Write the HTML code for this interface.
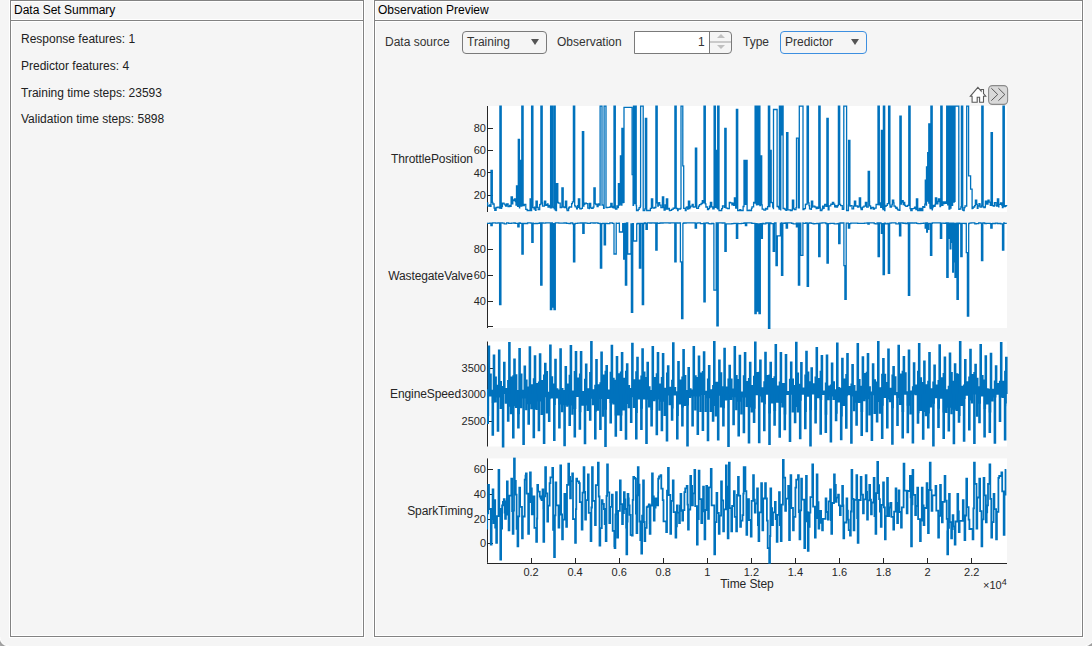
<!DOCTYPE html>
<html><head><meta charset="utf-8">
<style>
html,body{margin:0;padding:0;}
body{width:1092px;height:646px;overflow:hidden;background:#f5f5f5;position:relative;font-family:"Liberation Sans",sans-serif;color:#212121;}
.abs{position:absolute;}
.panel{position:absolute;box-sizing:border-box;border:1px solid #828282;box-shadow:0 0 0 1px #fff, inset 0 0 0 1px #fff;}
.sep{position:absolute;height:1px;background:#828282;box-shadow:0 -1px 0 #fff,0 1px 0 #fff;}
.t12{position:absolute;font-size:12px;line-height:14px;white-space:nowrap;}
.dd{position:absolute;box-sizing:border-box;border:1px solid #7a7a7a;border-radius:4px;background:#f5f5f5;}
.tri{position:absolute;width:0;height:0;border-left:4px solid transparent;border-right:4px solid transparent;border-top:6px solid #555;}
.ax{position:absolute;font-size:11px;line-height:13px;white-space:nowrap;color:#262626;}
.axl{position:absolute;font-size:12px;line-height:14px;white-space:nowrap;color:#262626;letter-spacing:-0.1px;}
</style></head>
<body>
<div class="abs" style="left:0;top:637px;width:9px;height:9px;background:radial-gradient(circle at 100% 0, #f5f5f5 8.2px, #fff 9px, #999 10.2px, #aaa 12px);"></div>
<div class="abs" style="left:1076px;top:630px;width:16px;height:16px;background:radial-gradient(circle at 4px 0, #f5f5f5 16.2px, #fff 17px, #999 18.2px, #aaa 20px);"></div>
<!-- left panel -->
<div class="panel" style="left:10px;top:0;width:354px;height:637px;"></div>
<div class="sep" style="left:11px;top:20px;width:352px;"></div>
<div class="t12" style="left:14px;top:3px;color:#000;">Data Set Summary</div>
<div class="t12" style="left:21px;top:32px;">Response features: 1</div>
<div class="t12" style="left:21px;top:59px;">Predictor features: 4</div>
<div class="t12" style="left:21px;top:86px;">Training time steps: 23593</div>
<div class="t12" style="left:21px;top:112px;">Validation time steps: 5898</div>

<!-- right panel -->
<div class="panel" style="left:374px;top:0;width:709px;height:637px;"></div>
<div class="sep" style="left:375px;top:20px;width:707px;"></div>
<div class="t12" style="left:378px;top:3px;color:#000;">Observation Preview</div>

<div class="t12" style="color:#333;left:385px;top:35px;">Data source</div>
<div class="dd" style="left:462px;top:31px;width:85px;height:23px;"></div>
<div class="t12" style="color:#333;left:467px;top:35px;">Training</div>
<div class="tri" style="left:531px;top:39px;"></div>

<div class="t12" style="color:#333;left:557px;top:35px;">Observation</div>
<div class="abs" style="left:634px;top:31px;width:98px;height:23px;box-sizing:border-box;border:1px solid #7a7a7a;border-radius:0 4px 4px 0;background:#f5f5f5;"></div>
<div class="abs" style="left:635px;top:32px;width:74px;height:21px;background:#fff;border-right:1px solid #7a7a7a;"></div>
<div class="abs" style="left:710px;top:41px;width:21px;height:2px;background:#cacaca;"></div>
<div class="t12" style="color:#333;left:698px;top:35px;">1</div>
<div class="abs" style="left:717px;top:34px;width:0;height:0;border-left:4px solid transparent;border-right:4px solid transparent;border-bottom:4px solid #c0c0c0;"></div>
<div class="abs" style="left:717px;top:45px;width:0;height:0;border-left:4px solid transparent;border-right:4px solid transparent;border-top:4px solid #c0c0c0;"></div>

<div class="t12" style="color:#333;left:743px;top:35px;">Type</div>
<div class="dd" style="left:780px;top:31px;width:87px;height:23px;border-color:#3d8fe0;"></div>
<div class="t12" style="color:#333;left:785px;top:35px;">Predictor</div>
<div class="tri" style="left:851px;top:39px;"></div>

<!-- toolbar -->
<svg class="abs" style="left:968px;top:85px;" width="42" height="22" viewBox="0 0 42 22">
  <path d="M2.4 11.2 L9.9 2.4 L13.1 6 L13.1 4.5 L15.5 4.5 L15.5 8.6 L17.7 11.2 L15.5 11.2 L15.5 17.2 L11.6 17.2 L11.6 12.3 L9.2 12.3 L9.2 17.2 L4.1 17.2 L4.1 11.2 Z" fill="#fff" stroke="#5a5a5a" stroke-width="1.1" stroke-linejoin="miter"/>
  <rect x="20.6" y="0.6" width="19" height="18.8" rx="3.8" fill="#d9d9d9" stroke="#8a8a8a" stroke-width="1.1"/>
  <path d="M23.3 3.2 L29.7 9.5 L23.3 15.7 M30.4 3.2 L36.8 9.5 L30.4 15.7" fill="none" stroke="#4a4a4a" stroke-width="0.9"/>
</svg>

<!-- plots -->
<svg class="abs" style="left:0;top:0" width="1092" height="646" viewBox="0 0 1092 646">
<rect x="487" y="106" width="520" height="106" fill="#fff"/>
<rect x="487" y="222.9" width="520" height="105.1" fill="#fff"/>
<rect x="487" y="341.5" width="520" height="105" fill="#fff"/>
<rect x="487" y="458.4" width="520" height="104.4" fill="#fff"/>
<defs>
<clipPath id="c0"><rect x="487" y="105" width="521" height="108"/></clipPath>
<clipPath id="c1"><rect x="487" y="221.9" width="521" height="107.1"/></clipPath>
<clipPath id="c2"><rect x="487" y="340.5" width="521" height="107"/></clipPath>
<clipPath id="c3"><rect x="487" y="457.4" width="521" height="106.4"/></clipPath>
</defs>
<path d="M487.5 106 V212" stroke="#262626" stroke-width="1" fill="none"/>
<path d="M487 128.5 H493" stroke="#262626" stroke-width="1"/>
<path d="M487 150.5 H493" stroke="#262626" stroke-width="1"/>
<path d="M487 172.5 H493" stroke="#262626" stroke-width="1"/>
<path d="M487 195.5 H493" stroke="#262626" stroke-width="1"/>
<path d="M487.5 222.9 V328" stroke="#262626" stroke-width="1" fill="none"/>
<path d="M487 249.5 H493" stroke="#262626" stroke-width="1"/>
<path d="M487 275.5 H493" stroke="#262626" stroke-width="1"/>
<path d="M487 301.5 H493" stroke="#262626" stroke-width="1"/>
<path d="M487 326.5 H493" stroke="#262626" stroke-width="1"/>
<path d="M487.5 341.5 V446.5" stroke="#262626" stroke-width="1" fill="none"/>
<path d="M487 368.5 H493" stroke="#262626" stroke-width="1"/>
<path d="M487 394.5 H493" stroke="#262626" stroke-width="1"/>
<path d="M487 421.5 H493" stroke="#262626" stroke-width="1"/>
<path d="M487.5 458.4 V562.8" stroke="#262626" stroke-width="1" fill="none"/>
<path d="M487 469.5 H493" stroke="#262626" stroke-width="1"/>
<path d="M487 494.5 H493" stroke="#262626" stroke-width="1"/>
<path d="M487 519.5 H493" stroke="#262626" stroke-width="1"/>
<path d="M487 543.5 H493" stroke="#262626" stroke-width="1"/>
<path d="M487 563.5 H1007" stroke="#262626" stroke-width="1"/>
<path d="M531.5 558 V563" stroke="#262626" stroke-width="1"/>
<path d="M575.5 558 V563" stroke="#262626" stroke-width="1"/>
<path d="M619.5 558 V563" stroke="#262626" stroke-width="1"/>
<path d="M663.5 558 V563" stroke="#262626" stroke-width="1"/>
<path d="M707.5 558 V563" stroke="#262626" stroke-width="1"/>
<path d="M751.5 558 V563" stroke="#262626" stroke-width="1"/>
<path d="M795.5 558 V563" stroke="#262626" stroke-width="1"/>
<path d="M839.5 558 V563" stroke="#262626" stroke-width="1"/>
<path d="M883.5 558 V563" stroke="#262626" stroke-width="1"/>
<path d="M927.5 558 V563" stroke="#262626" stroke-width="1"/>
<path d="M971.5 558 V563" stroke="#262626" stroke-width="1"/>
<path clip-path="url(#c0)" d="M487 202.9L487.7 202.9L487.7 205.8L488.9 205.8L488.9 206.2L489.6 206.2L489.6 205L490.1 205L490.1 206.4L491 206.4L491 170.3L492.3 170.3L492.3 202.4L492.8 202.4L492.8 204L494.1 204L494.1 208.2L494.8 208.2L494.8 210.3L496.1 210.3L496.1 207.5L497.7 207.5L497.7 207.1L499.4 207.1L499.4 208.1L499.9 208.1L499.9 106.2L501.2 106.2L501.2 208.4L501.6 208.4L501.6 206.7L502.4 206.7L502.4 203.1L504 203.1L504 204.2L505.1 204.2L505.1 205.1L505.7 205.1L505.7 206.1L506.7 206.1L506.7 204L508.1 204L508.1 206.5L509.7 206.5L509.7 205.4L510.2 205.4L510.2 206.4L511.1 206.4L511.1 196.8L512.4 196.8L512.4 203.8L512.8 203.8L512.8 200L513.7 200L513.7 200.5L514.4 200.5L514.4 199L515.4 199L515.4 201.6L516 201.6L516 205.2L516.5 205.2L516.5 185.8L517.6 185.8L517.6 206.4L518.3 206.4L518.3 139.3L519.4 139.3L519.4 206.8L519.5 206.8L519.5 207.8L519.7 207.8L519.7 160.3L520.8 160.3L520.8 206.2L521.8 206.2L521.8 106.2L523.1 106.2L523.1 205.7L524.3 205.7L524.3 204.3L525.8 204.3L525.8 209.3L526.4 209.3L526.4 209.4L527.2 209.4L527.2 210.5L530.1 210.5L530.1 199L530.8 199L530.8 210.5L531.6 210.5L531.6 106.2L532.9 106.2L532.9 207.7L534.1 207.7L534.1 209L534.6 209L534.6 207.2L535.4 207.2L535.4 210.3L536 210.3L536 201.2L537.3 201.2L537.3 207.3L538.2 207.3L538.2 209.7L539.7 209.7L539.7 204.7L540.4 204.7L540.4 204.2L540.9 204.2L540.9 106.2L542.2 106.2L542.2 203L542.5 203L542.5 206.2L544 206.2L544 206.2L544.4 206.2L544.4 201.2L545.7 201.2L545.7 205.4L546.7 205.4L546.7 204.7L547.5 204.7L547.5 203.9L548 203.9L548 207.2L549.3 207.2L549.3 205.5L550.4 205.5L550.4 207.9L550.6 207.9L550.6 106.2L551.3 106.2L551.3 207.9L551.7 207.9L551.7 206.1L552.2 206.1L552.2 207.1L552.4 207.1L552.4 106.2L553.1 106.2L553.1 207.1L553.4 207.1L553.4 207.5L554.3 207.5L554.3 208.8L554.5 208.8L554.5 106.2L555.2 106.2L555.2 208.8L555.3 208.8L555.3 210L556.2 210L556.2 210.5L556.5 210.5L556.5 183.6L557.8 183.6L557.8 202.5L558.4 202.5L558.4 203.2L560.2 203.2L560.2 207.5L561.6 207.5L561.6 207.1L561.9 207.1L561.9 188L563.2 188L563.2 207L563.7 207L563.7 206.9L564.3 206.9L564.3 207.6L565.4 207.6L565.4 201.2L566.7 201.2L566.7 208.9L567.1 208.9L567.1 210.5L568.6 210.5L568.6 208L569.3 208L569.3 206.8L570.4 206.8L570.4 207L571.6 207L571.6 203.7L572.4 203.7L572.4 201.8L573.4 201.8L573.4 106.2L574.7 106.2L574.7 205.7L575.2 205.7L575.2 206.9L576.6 206.9L576.6 208.9L577.4 208.9L577.4 205.7L578 205.7L578 207.3L578.4 207.3L578.4 199L579.7 199L579.7 208.1L579.9 208.1L579.9 208.9L581.4 208.9L581.4 208.4L582.4 208.4L582.4 131.6L583.7 131.6L583.7 206.2L583.9 206.2L583.9 204.3L584.8 204.3L584.8 203.1L586.4 203.1L586.4 203.7L587.8 203.7L587.8 208.1L589.3 208.1L589.3 208.5L589.4 208.5L589.4 203.4L590.7 203.4L590.7 207.8L591.7 207.8L591.7 208.4L593.1 208.4L593.1 207.1L593.9 207.1L593.9 188L595.2 188L595.2 203.6L595.8 203.6L595.8 204.5L597.1 204.5L597.1 206.6L598.1 206.6L598.1 203.9L598.8 203.9L598.8 205.1L599.8 205.1L599.8 205.2L600.1 205.2L600.1 106.2L602 106.2L602 205L602.5 205L602.5 205.2L603.6 205.2L603.6 208.4L604.1 208.4L604.1 106.2L606 106.2L606 207.6L606.3 207.6L606.3 207.5L607.7 207.5L607.7 207.3L608.5 207.3L608.5 207.3L610.1 207.3L610.1 206.6L610.8 206.6L610.8 203.4L612.1 203.4L612.1 207.4L612.6 207.4L612.6 206.3L613.2 206.3L613.2 207.9L614 207.9L614 106.2L615.3 106.2L615.3 208.4L615.5 208.4L615.5 209.1L616.9 209.1L616.9 206L617.4 206L617.4 207.6L618.4 207.6L618.4 183.6L619.7 183.6L619.7 205.1L620.1 205.1L620.1 204.1L620.4 204.1L620.4 155.9L621.7 155.9L621.7 205.2L621.9 205.2L621.9 128.3L623.2 128.3L623.2 202.7L623.3 202.7L623.3 202.3L624 202.3L624 107.3L632.1 107.3L632.1 174.7L633.1 174.7L633.1 205.4L633.5 205.4L633.5 106.2L634.6 106.2L634.6 203.7L635.1 203.7L635.1 106.2L636.2 106.2L636.2 205.6L636.5 205.6L636.5 210.5L638.2 210.5L638.2 209.3L639.1 209.3L639.1 207.6L640.3 207.6L640.3 206L640.6 206L640.6 106.2L643.2 106.2L643.2 210.5L644.8 210.5L644.8 208.8L645.4 208.8L645.4 118.4L646.7 118.4L646.7 210.5L650.4 210.5L650.4 208.4L651.4 208.4L651.4 199L652.7 199L652.7 207.1L652.8 207.1L652.8 207.8L653.5 207.8L653.5 208L654.7 208L654.7 207.5L655.9 207.5L655.9 106.2L657.2 106.2L657.2 202.9L657.8 202.9L657.8 206L658.3 206L658.3 203.6L659.1 203.6L659.1 202.6L659.7 202.6L659.7 205.1L660.9 205.1L660.9 207.6L661.9 207.6L661.9 207.7L662.4 207.7L662.4 196.8L663.7 196.8L663.7 207.6L664.1 207.6L664.1 210.2L665.1 210.2L665.1 205L666.3 205L666.3 209L666.4 209L666.4 199L667.7 199L667.7 209L668 209L668 208.5L669.4 208.5L669.4 210.5L670.1 210.5L670.1 210.4L671.6 210.4L671.6 209.4L673.1 209.4L673.1 208.1L673.8 208.1L673.8 208.4L674.5 208.4L674.5 207.9L674.9 207.9L674.9 106.2L676.2 106.2L676.2 208.5L677 208.5L677 208.5L677.6 208.5L677.6 210.5L678.1 210.5L678.1 209L679.5 209L679.5 209.2L680.3 209.2L680.3 208.5L681 208.5L681 106.2L682.8 106.2L682.8 165.9L683.7 165.9L683.7 208.3L685.3 208.3L685.3 210.5L686.1 210.5L686.1 207.4L687 207.4L687 207L687.6 207L687.6 209.1L688.1 209.1L688.1 208.5L688.4 208.5L688.4 201.2L689.7 201.2L689.7 208.5L689.8 208.5L689.8 207.5L690.6 207.5L690.6 206.2L692.2 206.2L692.2 204.3L693.2 204.3L693.2 207L694.7 207L694.7 206.9L695.4 206.9L695.4 148.2L696.7 148.2L696.7 208L696.8 208L696.8 208.3L698.5 208.3L698.5 206.2L699.5 206.2L699.5 204.6L701.1 204.6L701.1 203.5L702.3 203.5L702.3 200.6L703.3 200.6L703.3 202.8L704 202.8L704 106.2L705.3 106.2L705.3 203.9L705.9 203.9L705.9 207L707.5 207L707.5 209.7L708.5 209.7L708.5 208.6L709.5 208.6L709.5 206.1L710.1 206.1L710.1 207L710.4 207L710.4 202.3L711.7 202.3L711.7 206.9L712.8 206.9L712.8 208.8L714.1 208.8L714.1 106.2L715.4 106.2L715.4 207.4L715.9 207.4L715.9 150.4L717.2 150.4L717.2 208.3L717.6 208.3L717.6 208.9L717.7 208.9L717.7 106.2L719 106.2L719 210.5L721.7 210.5L721.7 208.6L722.5 208.6L722.5 205.9L724.2 205.9L724.2 207.4L724.8 207.4L724.8 128.3L726.1 128.3L726.1 208.1L727.6 208.1L727.6 208.7L729.3 208.7L729.3 202.4L730.5 202.4L730.5 202.8L731.9 202.8L731.9 204.8L733.2 204.8L733.2 203.2L733.7 203.2L733.7 205.4L734.4 205.4L734.4 197.9L735.7 197.9L735.7 208.2L736.4 208.2L736.4 109.5L737.7 109.5L737.7 210.5L739.8 210.5L739.8 209.6L740.7 209.6L740.7 210.5L743.1 210.5L743.1 206.5L744 206.5L744 160.3L745.3 160.3L745.3 204.4L745.8 204.4L745.8 160.3L747.1 160.3L747.1 210.5L747.4 210.5L747.4 210.5L749 210.5L749 210.2L749.9 210.2L749.9 210.5L751.5 210.5L751.5 208.3L752 208.3L752 206.8L753.6 206.8L753.6 202.5L755 202.5L755 203.1L755.1 203.1L755.1 106.2L756.4 106.2L756.4 204.4L756.5 204.4L756.5 204.8L756.9 204.8L756.9 106.2L758.2 106.2L758.2 204.7L758.6 204.7L758.6 106.2L759.9 106.2L759.9 205.6L760.4 205.6L760.4 155.9L761.7 155.9L761.7 204.9L762.2 204.9L762.2 209.2L763.9 209.2L763.9 210.2L765.6 210.2L765.6 208.5L766.3 208.5L766.3 209L767.6 209L767.6 206.7L768.4 206.7L768.4 106.2L769.7 106.2L769.7 206.6L769.9 206.6L769.9 150.4L771.2 150.4L771.2 202.5L771.6 202.5L771.6 202.7L772.7 202.7L772.7 207.2L773.4 207.2L773.4 208.5L773.5 208.5L773.5 109.5L777.1 109.5L777.1 206.5L778.5 206.5L778.5 207.6L779.1 207.6L779.1 209.1L779.4 209.1L779.4 106.2L780.7 106.2L780.7 209.1L780.8 209.1L780.8 210.5L780.8 210.5L780.8 134.9L781.8 134.9L781.8 106.2L783.1 106.2L783.1 208.5L783.8 208.5L783.8 208.4L784.7 208.4L784.7 209.2L785.5 209.2L785.5 210L786.5 210L786.5 210.4L786.6 210.4L786.6 132.7L787.9 132.7L787.9 209.9L788.9 209.9L788.9 209.9L790.4 209.9L790.4 210.5L792.1 210.5L792.1 209.5L792.4 209.5L792.4 200.1L793.7 200.1L793.7 208.8L794.5 208.8L794.5 209.7L796 209.7L796 207.7L796.5 207.7L796.5 138.2L798.4 138.2L798.4 207.8L799.3 207.8L799.3 106.2L803 106.2L803 209.6L804 209.6L804 208.6L805.4 208.6L805.4 204.5L806 204.5L806 204.1L807.1 204.1L807.1 106.2L808.4 106.2L808.4 202.8L809 202.8L809 205.7L809.5 205.7L809.5 208.8L810.5 208.8L810.5 209L811.3 209L811.3 209.4L811.4 209.4L811.4 201.2L812.7 201.2L812.7 207.1L812.9 207.1L812.9 206.1L814.2 206.1L814.2 206.2L814.8 206.2L814.8 207L815.5 207L815.5 207.1L816.2 207.1L816.2 208.5L816.9 208.5L816.9 207.1L818 207.1L818 208.4L818.8 208.4L818.8 106.2L820.1 106.2L820.1 207.5L820.3 207.5L820.3 210.5L821.9 210.5L821.9 209.2L822.6 209.2L822.6 206.1L823.2 206.1L823.2 208.3L824.1 208.3L824.1 206.2L824.7 206.2L824.7 204.3L826.1 204.3L826.1 206.3L826.9 206.3L826.9 118.4L828.2 118.4L828.2 209.9L829 209.9L829 205.9L830.8 205.9L830.8 204.1L832 204.1L832 204.4L832.4 204.4L832.4 202.3L833.7 202.3L833.7 204.2L834.7 204.2L834.7 206.8L835.6 206.8L835.6 205.6L836.1 205.6L836.1 207.2L837.5 207.2L837.5 205.5L838.4 205.5L838.4 106.2L839.7 106.2L839.7 204.4L840.6 204.4L840.6 205.6L842.3 205.6L842.3 209.3L843.7 209.3L843.7 208.1L843.8 208.1L843.8 106.2L846.6 106.2L846.6 210.5L848.4 210.5L848.4 205.1L848.6 205.1L848.6 140.5L849.9 140.5L849.9 206.1L850.3 206.1L850.3 205.6L852 205.6L852 208.8L853.6 208.8L853.6 206.1L854.4 206.1L854.4 201.2L855.7 201.2L855.7 206.2L855.8 206.2L855.8 206L857.5 206L857.5 207L858.9 207L858.9 206.1L859.3 206.1L859.3 197.9L860.6 197.9L860.6 207.9L861.1 207.9L861.1 209.6L862.4 209.6L862.4 207.1L863.9 207.1L863.9 206.2L865.4 206.2L865.4 202.3L866.7 202.3L866.7 207.1L867.4 207.1L867.4 207.1L868.2 207.1L868.2 171.4L869.5 171.4L869.5 201.3L869.6 201.3L869.6 205.9L870.6 205.9L870.6 208.6L871.8 208.6L871.8 207.4L873.4 207.4L873.4 209.1L874.5 209.1L874.5 208.1L876.1 208.1L876.1 204.4L877.6 204.4L877.6 204.5L878 204.5L878 106.2L879.3 106.2L879.3 204.9L879.5 204.9L879.5 203L880.7 203L880.7 207.3L881.4 207.3L881.4 130.5L882.7 130.5L882.7 208.3L883 208.3L883 209.5L883.4 209.5L883.4 106.2L884.7 106.2L884.7 210.5L884.9 210.5L884.9 206.3L886.1 206.3L886.1 205.4L887.3 205.4L887.3 203.6L888.6 203.6L888.6 106.2L889.9 106.2L889.9 204.9L890.1 204.9L890.1 207.1L891.4 207.1L891.4 206.1L892 206.1L892 204.4L892.4 204.4L892.4 200.1L893.7 200.1L893.7 202.9L894 202.9L894 206.1L895.3 206.1L895.3 207.1L895.9 207.1L895.9 208.4L896.5 208.4L896.5 207.4L897.1 207.4L897.1 208.9L897.7 208.9L897.7 209.8L899.1 209.8L899.1 210.4L899.9 210.4L899.9 116.1L901.2 116.1L901.2 204.2L901.4 204.2L901.4 202.1L902 202.1L902 200.6L903.2 200.6L903.2 204.5L903.4 204.5L903.4 202.3L904.7 202.3L904.7 205.2L905 205.2L905 205.3L905.5 205.3L905.5 206.2L906.4 206.2L906.4 206.3L907.6 206.3L907.6 205.3L908.8 205.3L908.8 106.2L910.1 106.2L910.1 208.7L910.8 208.7L910.8 210.5L912.1 210.5L912.1 208.6L913 208.6L913 208.6L913.6 208.6L913.6 208.4L914.7 208.4L914.7 207.1L915.9 207.1L915.9 209.6L916.4 209.6L916.4 199L917.7 199L917.7 210.5L919.2 210.5L919.2 208.4L920 208.4L920 210.5L920.7 210.5L920.7 208.5L921.7 208.5L921.7 210.5L922.8 210.5L922.8 206.7L924 206.7L924 207.3L924.8 207.3L924.8 204.2L925.3 204.2L925.3 180.2L926.4 180.2L926.4 205.1L926.5 205.1L926.5 167L927.6 167L927.6 201L927.7 201L927.7 152.6L928.8 152.6L928.8 203.7L928.8 203.7L928.8 123.9L929.9 123.9L929.9 207.1L930.2 207.1L930.2 208.5L930.9 208.5L930.9 106.2L932.2 106.2L932.2 209.9L932.4 209.9L932.4 207.7L933 207.7L933 205.5L934.1 205.5L934.1 206.4L935.1 206.4L935.1 204.5L935.4 204.5L935.4 197.9L936.7 197.9L936.7 203.9L937.9 203.9L937.9 201.5L938.4 201.5L938.4 199L939.7 199L939.7 201.7L940 201.7L940 206.6L940.5 206.6L940.5 205.6L940.8 205.6L940.8 106.2L942.1 106.2L942.1 205.3L942.9 205.3L942.9 202L943.4 202L943.4 203.6L944.4 203.6L944.4 202L945.7 202L945.7 203.3L946.6 203.3L946.6 201L946.7 201L946.7 106.2L947.4 106.2L947.4 201L947.7 201L947.7 204.8L948.3 204.8L948.3 106.2L949 106.2L949 209L949.8 209L949.8 208.2L949.9 208.2L949.9 106.2L950.6 106.2L950.6 208.2L951 208.2L951 205.4L951.5 205.4L951.5 106.2L952.2 106.2L952.2 205.4L952.6 205.4L952.6 202.1L953.1 202.1L953.1 106.2L953.8 106.2L953.8 202.1L954.2 202.1L954.2 201.4L955 201.4L955 106.2L958.8 106.2L958.8 209.4L959.2 209.4L959.2 209L960.9 209L960.9 207L961.4 207L961.4 106.2L962.7 106.2L962.7 210.1L963.6 210.1L963.6 210.5L964.2 210.5L964.2 207.7L965 207.7L965 205.9L966.5 205.9L966.5 206.2L966.7 206.2L966.7 106.2L968.6 106.2L968.6 175.8L970.6 175.8L970.6 189.1L972.1 189.1L972.1 208.6L972.3 208.6L972.3 208.3L973.1 208.3L973.1 207L974.6 207L974.6 205.7L975.4 205.7L975.4 200.1L976.7 200.1L976.7 204.4L977.3 204.4L977.3 208.4L978 208.4L978 206L979 206L979 203.7L979.5 203.7L979.5 204L980.1 204L980.1 207.1L981.6 207.1L981.6 205.8L981.8 205.8L981.8 106.2L983.1 106.2L983.1 206.8L983.9 206.8L983.9 207.5L985.1 207.5L985.1 206.9L985.4 206.9L985.4 201.2L986.7 201.2L986.7 204.2L988 204.2L988 200.1L989.1 200.1L989.1 202.1L990.3 202.1L990.3 205.4L991.1 205.4L991.1 132.7L992.4 132.7L992.4 205.7L993.4 205.7L993.4 206L994.4 206L994.4 202.7L996 202.7L996 205.6L996.7 205.6L996.7 206L997.4 206L997.4 199L998.7 199L998.7 206.8L998.9 206.8L998.9 204.4L1000.5 204.4L1000.5 203L1001.7 203L1001.7 205.1L1002.4 205.1L1002.4 207.7L1003 207.7L1003 106.2L1004.3 106.2L1004.3 206.6L1005.4 206.6L1005.4 205.6L1006.6 205.6L1006.6 206.1L1006.8 206.1" fill="none" stroke="#0072bd" stroke-width="1.3" stroke-linejoin="miter"/>
<path clip-path="url(#c1)" d="M487 223.3L489.6 223.3L489.6 223.1L490.9 223.1L490.9 225.5L492.2 225.5L492.2 223.1L492.7 223.1L492.7 222.9L495.6 222.9L495.6 223.2L497.9 223.2L497.9 222.9L499.6 222.9L499.6 304.5L500.9 304.5L500.9 222.9L502.5 222.9L502.5 223.1L504.2 223.1L504.2 223.8L506.6 223.8L506.6 222.9L508.7 222.9L508.7 223.4L511.4 223.4L511.4 223.1L513.8 223.1L513.8 223L515.2 223L515.2 223.3L517.8 223.3L517.8 226.8L519.1 226.8L519.1 223L520.3 223L520.3 223.4L521.9 223.4L521.9 254L523.2 254L523.2 223.3L523.7 223.3L523.7 223.5L526.3 223.5L526.3 223.7L527.6 223.7L527.6 222.9L530.9 222.9L530.9 223.2L531.8 223.2L531.8 242.3L533.1 242.3L533.1 223.2L533.4 223.2L533.4 223.6L535.4 223.6L535.4 223.5L536.4 223.5L536.4 223.6L537.6 223.6L537.6 223.4L539.3 223.4L539.3 223L540.7 223L540.7 285.1L542 285.1L542 222.9L543.1 222.9L543.1 223.2L545.6 223.2L545.6 222.9L547.9 222.9L547.9 222.9L550.4 222.9L550.4 309.7L551.7 309.7L551.7 222.9L552.4 222.9L552.4 307.1L553.7 307.1L553.7 223.6L554 223.6L554 309.7L555.3 309.7L555.3 222.9L557.1 222.9L557.1 222.9L558.8 222.9L558.8 223.1L561 223.1L561 223.1L564 223.1L564 223L566.6 223L566.6 223.4L569 223.4L569 223.5L570.8 223.5L570.8 222.9L572.7 222.9L572.7 223.8L573.5 223.8L573.5 261.8L574.8 261.8L574.8 223.8L575.3 223.8L575.3 223.4L577.6 223.4L577.6 223.2L580.4 223.2L580.4 223L582.8 223L582.8 233.3L584.1 233.3L584.1 222.9L585.9 222.9L585.9 223.2L587.7 223.2L587.7 223.4L590.4 223.4L590.4 222.9L591.7 222.9L591.7 222.9L593.2 222.9L593.2 223L595.3 223L595.3 222.9L598 222.9L598 223.4L599.8 223.4L599.8 223.5L600.4 223.5L600.4 268.2L601.7 268.2L601.7 223.6L602.5 223.6L602.5 223.4L604.2 223.4L604.2 244.9L605.5 244.9L605.5 223.4L607.1 223.4L607.1 223.6L609.8 223.6L609.8 222.9L612.4 222.9L612.4 223.4L614 223.4L614 254L616.2 254L616.2 223.2L616.5 223.2L616.5 223.3L618.9 223.3L618.9 223.1L619.4 223.1L619.4 232L622.7 232L622.7 223.7L623.7 223.7L623.7 259.2L625 259.2L625 223.4L625.4 223.4L625.4 285.1L626.7 285.1L626.7 222.9L627.7 222.9L627.7 254L631 254L631 223.8L631.4 223.8L631.4 312.3L632.7 312.3L632.7 223.7L633.4 223.7L633.4 241L636.7 241L636.7 223.8L637.4 223.8L637.4 223.5L639.4 223.5L639.4 268.2L640.7 268.2L640.7 223.3L641.4 223.3L641.4 223.3L642.3 223.3L642.3 304.5L643.6 304.5L643.6 223.5L644.4 223.5L644.4 222.9L645.4 222.9L645.4 223.3L646 223.3L646 229.4L647.3 229.4L647.3 223.3L647.4 223.3L647.4 222.9L649.8 222.9L649.8 223L651.9 223L651.9 222.9L654.1 222.9L654.1 223L655.8 223L655.8 250.1L657.1 250.1L657.1 223L657.6 223L657.6 223.4L660 223.4L660 222.9L661.6 222.9L661.6 223L663.1 223L663.1 222.9L669.1 222.9L669.1 223.1L670.5 223.1L670.5 222.9L674.8 222.9L674.8 261.8L676.1 261.8L676.1 222.9L677.7 222.9L677.7 223.2L679.2 223.2L679.2 223L680.4 223L680.4 261.8L681.6 261.8L681.6 318.7L682.9 318.7L682.9 223.4L683.7 223.4L683.7 222.9L685 222.9L685 223.1L686.1 223.1L686.1 222.9L692.3 222.9L692.3 222.9L695.1 222.9L695.1 223.1L695.2 223.1L695.2 228.1L696.5 228.1L696.5 223.1L697.8 223.1L697.8 222.9L700.4 222.9L700.4 223.6L702.6 223.6L702.6 223.7L703.8 223.7L703.8 223.1L703.9 223.1L703.9 301.9L705.2 301.9L705.2 223.1L706.4 223.1L706.4 222.9L708.2 222.9L708.2 223.6L709.9 223.6L709.9 223.8L711.7 223.8L711.7 223.5L713.4 223.5L713.4 223.6L713.9 223.6L713.9 290.2L716.2 290.2L716.2 222.9L716.9 222.9L716.9 325.9L718.2 325.9L718.2 222.9L722.2 222.9L722.2 223L723.2 223L723.2 222.9L724.9 222.9L724.9 251.4L726.2 251.4L726.2 223.8L731.9 223.8L731.9 223.7L733.9 223.7L733.9 223.4L735.7 223.4L735.7 223.3L736.4 223.3L736.4 238.4L737.7 238.4L737.7 223.3L738.1 223.3L738.1 223.7L739.7 223.7L739.7 223.7L741.5 223.7L741.5 223.3L744 223.3L744 222.9L745.4 222.9L745.4 225.5L746.7 225.5L746.7 222.9L751.8 222.9L751.8 223.4L754.4 223.4L754.4 223.4L754.9 223.4L754.9 313.6L756.2 313.6L756.2 223.7L756.9 223.7L756.9 311L758.2 311L758.2 223.8L759 223.8L759 313.6L760.3 313.6L760.3 223.7L761.1 223.7L761.1 238.4L762.4 238.4L762.4 223.5L763.8 223.5L763.8 223.8L765.8 223.8L765.8 223L768.4 223L768.4 223L768.5 223L768.5 328.6L769.8 328.6L769.8 223L771 223L771 223.7L773.2 223.7L773.2 251.4L774.5 251.4L774.5 223L776 223L776 265.6L777.3 265.6L777.3 235.8L780.4 235.8L780.4 223.5L781.4 223.5L781.4 223L781.5 223L781.5 275.3L782.8 275.3L782.8 223.1L784.2 223.1L784.2 223.3L785.2 223.3L785.2 222.9L786.2 222.9L786.2 228.1L787.5 228.1L787.5 222.9L791.7 222.9L791.7 223.4L793.2 223.4L793.2 223.8L796.3 223.8L796.3 223.1L796.4 223.1L796.4 226.8L797.7 226.8L797.7 223.1L798.4 223.1L798.4 285.1L799.7 285.1L799.7 223.2L800.8 223.2L800.8 255.3L802.9 255.3L802.9 222.9L803 222.9L803 223.3L805.6 223.3L805.6 223L807.2 223L807.2 286.4L808.5 286.4L808.5 223.3L809.1 223.3L809.1 222.9L811.1 222.9L811.1 223.4L813.2 223.4L813.2 223.8L814.7 223.8L814.7 223.7L816.9 223.7L816.9 223.5L818.7 223.5L818.7 256.6L820 256.6L820 223.2L822 223.2L822 222.9L825.8 222.9L825.8 223.5L827 223.5L827 263L828.3 263L828.3 223.6L830.1 223.6L830.1 223.4L831.3 223.4L831.3 223.3L834.2 223.3L834.2 223.8L837.3 223.8L837.3 223.6L838.4 223.6L838.4 223.4L838.7 223.4L838.7 243.6L840 243.6L840 223L842.4 223L842.4 222.9L843.9 222.9L843.9 265.6L844.9 265.6L844.9 299.3L846.2 299.3L846.2 223.2L846.3 223.2L846.3 223.2L848.3 223.2L848.3 223.6L848.4 223.6L848.4 228.1L849.7 228.1L849.7 223.6L850.8 223.6L850.8 223.2L853.5 223.2L853.5 223.1L855 223.1L855 223.1L857.7 223.1L857.7 223.3L859.1 223.3L859.1 223.3L861.7 223.3L861.7 223.3L862.7 223.3L862.7 223.3L864.5 223.3L864.5 223.2L867.1 223.2L867.1 222.9L867.9 222.9L867.9 224.2L869.2 224.2L869.2 222.9L874.2 222.9L874.2 223.7L875.4 223.7L875.4 223.8L877.1 223.8L877.1 222.9L878.1 222.9L878.1 256.6L879.4 256.6L879.4 222.9L881 222.9L881 223.7L881.4 223.7L881.4 233.3L882.7 233.3L882.7 223.7L883.1 223.7L883.1 274.7L884.4 274.7L884.4 223.2L885.4 223.2L885.4 223.8L887.2 223.8L887.2 223.3L888.3 223.3L888.3 273.4L889.6 273.4L889.6 223.2L891.1 223.2L891.1 222.9L895.9 222.9L895.9 223.8L898.6 223.8L898.6 222.9L899.5 222.9L899.5 235.8L900.8 235.8L900.8 222.9L903 222.9L903 223.3L904.1 223.3L904.1 223.2L905.4 223.2L905.4 223.5L907.5 223.5L907.5 223L908.4 223L908.4 295.4L909.7 295.4L909.7 223L910.3 223L910.3 223.2L911.3 223.2L911.3 223L913.2 223L913.2 223.1L914.7 223.1L914.7 222.9L916.5 222.9L916.5 223.4L917.9 223.4L917.9 223.7L920.9 223.7L920.9 223.3L923.5 223.3L923.5 223.2L925.2 223.2L925.2 228.1L925.9 228.1L925.9 223L926.7 223L926.7 232L927.4 232L927.4 223L927.7 223L927.7 223.6L928.2 223.6L928.2 229.4L928.9 229.4L928.9 223.6L929.8 223.6L929.8 223.3L930.5 223.3L930.5 255.3L931.8 255.3L931.8 223.3L932.3 223.3L932.3 222.9L940.4 222.9L940.4 238.4L941.7 238.4L941.7 223.2L944 223.2L944 223.4L945.9 223.4L945.9 222.9L946.8 222.9L946.8 277.3L948.1 277.3L948.1 222.9L948.2 222.9L948.2 223.1L949 223.1L949 238.4L949.7 238.4L949.7 223.1L950.2 223.1L950.2 248.8L950.9 248.8L950.9 223.1L951 223.1L951 223.1L951.4 223.1L951.4 242.3L952.1 242.3L952.1 223.1L952.7 223.1L952.7 272.1L953.4 272.1L953.4 223.1L953.6 223.1L953.6 223.3L953.9 223.3L953.9 261.8L954.6 261.8L954.6 223.3L955 223.3L955 277.3L955.7 277.3L955.7 223.5L956.9 223.5L956.9 223.2L957 223.2L957 299.3L958.3 299.3L958.3 223.2L959.6 223.2L959.6 223.5L960.8 223.5L960.8 256.6L962.1 256.6L962.1 223.4L965 223.4L965 223.5L966.3 223.5L966.3 252.7L967.4 252.7L967.4 316.1L968.7 316.1L968.7 223.7L969.2 223.7L969.2 223.2L971 223.2L971 222.9L974.8 222.9L974.8 223.8L976.3 223.8L976.3 223.6L978.7 223.6L978.7 222.9L980.6 222.9L980.6 223.1L981.5 223.1L981.5 260.5L982.8 260.5L982.8 223.1L983.2 223.1L983.2 223L984.8 223L984.8 223.6L986.4 223.6L986.4 223.4L988.1 223.4L988.1 223.4L990.3 223.4L990.3 223.6L990.8 223.6L990.8 228.1L992.1 228.1L992.1 223.6L992.7 223.6L992.7 223.5L995.5 223.5L995.5 223.1L997.4 223.1L997.4 223.5L998.9 223.5L998.9 223.5L1000.8 223.5L1000.8 223.8L1002.5 223.8L1002.5 250.1L1003.8 250.1L1003.8 223L1004.2 223L1004.2 223.4L1006.8 223.4" fill="none" stroke="#0072bd" stroke-width="1.3" stroke-linejoin="miter"/>
<path clip-path="url(#c3)" d="M487 528.6L487 528.6L487.2 528.6L487.2 513.4L488.2 513.4L488.2 484.9L489 484.9L489 509L490.8 509L490.8 544.6L491.6 544.6L491.6 519.1L492.6 519.1L492.6 489.4L493.4 489.4L493.4 512.7L493.5 512.7L493.5 523.2L494.3 523.2L494.3 514.8L494.4 514.8L494.4 500.1L495.2 500.1L495.2 527.6L496.2 527.6L496.2 542.8L497 542.8L497 516.2L498.5 516.2L498.5 469.8L499.3 469.8L499.3 508.9L500.3 508.9L500.3 559.7L501.1 559.7L501.1 528.7L502.1 528.7L502.1 505.4L502.9 505.4L502.9 502L503.8 502L503.8 499.2L504.6 499.2L504.6 512.6L505.1 512.6L505.1 518.8L505.9 518.8L505.9 501.4L506.9 501.4L506.9 481.4L507.7 481.4L507.7 514.5L508.6 514.5L508.6 530.4L509.4 530.4L509.4 495.7L511.3 495.7L511.3 478.7L512.1 478.7L512.1 511.1L512.7 511.1L512.7 533.9L513.5 533.9L513.5 510.6L514 510.6L514 458.2L514.8 458.2L514.8 480.8L515.8 480.8L515.8 494.7L516.6 494.7L516.6 528.8L517.5 528.8L517.5 546.4L518.3 546.4L518.3 516.4L519.3 516.4L519.3 487.6L520.1 487.6L520.1 506.8L522 506.8L522 538.4L522.8 538.4L522.8 516.5L524.7 516.5L524.7 479.6L525.5 479.6L525.5 475.6L525.9 475.6L525.9 473.4L526.7 473.4L526.7 493.7L528.2 493.7L528.2 533.9L529 533.9L529 502.1L530 502.1L530 472.5L530.8 472.5L530.8 488.4L531.8 488.4L531.8 514.3L532.6 514.3L532.6 506.8L533.6 506.8L533.6 496.5L534.4 496.5L534.4 527.9L536.2 527.9L536.2 541.9L537 541.9L537 518.5L537.3 518.5L537.3 484.9L538.1 484.9L538.1 491.6L539.8 491.6L539.8 496.5L540.6 496.5L540.6 498.7L541.6 498.7L541.6 500.1L542.4 500.1L542.4 495.6L542.5 495.6L542.5 489.4L543.3 489.4L543.3 508.2L543.4 508.2L543.4 541.9L544.2 541.9L544.2 496.4L545.2 496.4L545.2 467.1L546 467.1L546 493.3L547.3 493.3L547.3 521.5L548.1 521.5L548.1 505.6L549.6 505.6L549.6 483.2L550.4 483.2L550.4 477.3L552.3 477.3L552.3 468L553.1 468L553.1 529.8L554.1 529.8L554.1 557.1L554.9 557.1L554.9 515.3L555.5 515.3L555.5 482.3L556.3 482.3L556.3 505.4L558.5 505.4L558.5 527.7L559.3 527.7L559.3 506.1L560.3 506.1L560.3 465.4L561.1 465.4L561.1 514.5L562.1 514.5L562.1 539.3L562.9 539.3L562.9 519.6L564.4 519.6L564.4 493.9L565.2 493.9L565.2 514.2L566.2 514.2L566.2 526.8L567 526.8L567 484.9L568.3 484.9L568.3 463.6L569.1 463.6L569.1 476.9L570.1 476.9L570.1 498.3L570.9 498.3L570.9 481.1L572.2 481.1L572.2 473.4L573 473.4L573 519.1L575.1 519.1L575.1 542.8L575.9 542.8L575.9 509.1L576.3 509.1L576.3 478.7L577.1 478.7L577.1 481.3L579 481.3L579 483.2L579.8 483.2L579.8 502.2L581.7 502.2L581.7 529.5L582.5 529.5L582.5 492.7L583.6 492.7L583.6 467.1L584.4 467.1L584.4 492L585.2 492L585.2 519.7L586 519.7L586 500.1L587.9 500.1L587.9 474.3L588.7 474.3L588.7 512.9L590.6 512.9L590.6 541L591.4 541L591.4 507.5L592 507.5L592 467.1L592.8 467.1L592.8 500.8L595 500.8L595 525L595.8 525L595.8 485.1L597.9 485.1L597.9 462.7L598.7 462.7L598.7 496.5L599.5 496.5L599.5 545.5L600.3 545.5L600.3 528.1L601.8 528.1L601.8 500.1L602.6 500.1L602.6 503.9L603.9 503.9L603.9 509L604.7 509L604.7 524L605.7 524L605.7 541L606.5 541L606.5 495.8L607.1 495.8L607.1 464.5L607.9 464.5L607.9 492.4L609.3 492.4L609.3 523.2L610.1 523.2L610.1 506.8L611.9 506.8L611.9 494.7L612.7 494.7L612.7 530.8L614.3 530.8L614.3 546.4L615.1 546.4L615.1 547.1L614.6 547.1L614.6 548.2L615.4 548.2L615.4 514.3L616 514.3L616 492.1L616.8 492.1L616.8 514.4L617.3 514.4L617.3 537.5L618.1 537.5L618.1 510.9L619.9 510.9L619.9 480.5L620.7 480.5L620.7 504.1L622.1 504.1L622.1 524.1L622.9 524.1L622.9 513L623.9 513L623.9 492.1L624.7 492.1L624.7 499.3L625.3 499.3L625.3 509L626.1 509L626.1 527.6L626.4 527.6L626.4 554.4L627.2 554.4L627.2 521.5L627.6 521.5L627.6 493.9L628.4 493.9L628.4 498.4L628.8 498.4L628.8 505.4L629.6 505.4L629.6 514.8L630.6 514.8L630.6 534.8L631.4 534.8L631.4 535.1L631.9 535.1L631.9 535.7L632.7 535.7L632.7 499.9L633.3 499.9L633.3 476.9L634.1 476.9L634.1 478L635.1 478L635.1 478.7L635.9 478.7L635.9 513.5L636.5 513.5L636.5 533L637.3 533L637.3 495.4L637.8 495.4L637.8 467.1L638.6 467.1L638.6 484.6L639.5 484.6L639.5 521.5L640.3 521.5L640.3 540.1L641.3 540.1L641.3 553.5L642.1 553.5L642.1 515.6L643.1 515.6L643.1 480.5L643.9 480.5L643.9 522L644.5 522L644.5 541L645.3 541L645.3 527.8L646.7 527.8L646.7 507.2L647.5 507.2L647.5 506.3L648.8 506.3L648.8 504.5L649.6 504.5L649.6 523.1L649.7 523.1L649.7 533.9L650.5 533.9L650.5 505.5L652 505.5L652 473.4L652.8 473.4L652.8 496.4L653.8 496.4L653.8 520.6L654.6 520.6L654.6 507.5L655.6 507.5L655.6 498.3L656.4 498.3L656.4 501L657.3 501L657.3 505.4L658.1 505.4L658.1 492.6L658.2 492.6L658.2 478.7L659 478.7L659 476.5L660.5 476.5L660.5 475.2L661.3 475.2L661.3 488.6L662.7 488.6L662.7 500.1L663.5 500.1L663.5 521.3L666.2 521.3L666.2 532.1L667 532.1L667 490.7L668 490.7L668 468L668.8 468L668.8 495L670.3 495L670.3 533.9L671.1 533.9L671.1 500.9L672.8 500.9L672.8 480.5L673.6 480.5L673.6 512.1L675.5 512.1L675.5 537.5L676.3 537.5L676.3 526.3L676.9 526.3L676.9 505.4L677.7 505.4L677.7 512.6L679.1 512.6L679.1 523.2L679.9 523.2L679.9 505.6L680.5 505.6L680.5 493.9L681.3 493.9L681.3 510.9L682.3 510.9L682.3 520.6L683.1 520.6L683.1 510.2L684.4 510.2L684.4 492.1L685.2 492.1L685.2 488.4L686.7 488.4L686.7 485.8L687.5 485.8L687.5 504.6L688 504.6L688 529.5L688.8 529.5L688.8 509.5L690.3 509.5L690.3 476L691.1 476L691.1 486L692.1 486L692.1 505.4L692.9 505.4L692.9 493.3L694.4 493.3L694.4 469.8L695.2 469.8L695.2 506.1L696.9 506.1L696.9 544.6L697.7 544.6L697.7 519L698.7 519L698.7 470.7L699.5 470.7L699.5 499.2L701.3 499.2L701.3 523.2L702.1 523.2L702.1 500.2L703.1 500.2L703.1 486.7L703.9 486.7L703.9 511.4L704.5 511.4L704.5 539.3L705.3 539.3L705.3 510L706.3 510L706.3 485.8L707.1 485.8L707.1 506.7L708.1 506.7L708.1 518.8L708.9 518.8L708.9 487.4L710.8 487.4L710.8 468.9L711.6 468.9L711.6 505.3L714.3 505.3L714.3 554.4L715.1 554.4L715.1 522.1L716.5 522.1L716.5 493L717.3 493L717.3 513L718.8 513L718.8 533.9L719.6 533.9L719.6 515.6L721.1 515.6L721.1 481.4L721.9 481.4L721.9 500.3L723.2 500.3L723.2 531.3L724 531.3L724 509.3L725.9 509.3L725.9 465.4L726.7 465.4L726.7 493.8L727.7 493.8L727.7 538.4L728.5 538.4L728.5 486.7L728.9 486.7L728.9 462.7L729.7 462.7L729.7 508.1L731.3 508.1L731.3 531.3L732.1 531.3L732.1 506L733.9 506L733.9 491.2L734.7 491.2L734.7 516.8L736.2 516.8L736.2 531.3L737 531.3L737 495L738 495L738 476.9L738.8 476.9L738.8 495.6L740.2 495.6L740.2 526.8L741 526.8L741 520.6L742.5 520.6L742.5 515.2L743.3 515.2L743.3 493.6L743.7 493.6L743.7 467.1L744.5 467.1L744.5 467.1L744.6 467.1L744.6 467.1L745.4 467.1L745.4 491.1L746.4 491.1L746.4 534.8L747.2 534.8L747.2 511.8L748.2 511.8L748.2 499.2L749 499.2L749 520L750.8 520L750.8 536.6L751.6 536.6L751.6 500.8L753.1 500.8L753.1 475.2L753.9 475.2L753.9 499.7L754.8 499.7L754.8 512.6L755.6 512.6L755.6 503.5L757.1 503.5L757.1 488.5L757.9 488.5L757.9 525.1L758.5 525.1L758.5 541L759.3 541L759.3 512.3L761.2 512.3L761.2 483.2L762 483.2L762 503.8L762.4 503.8L762.4 530.4L763.2 530.4L763.2 498.5L765.1 498.5L765.1 483.2L765.9 483.2L765.9 498.3L766.9 498.3L766.9 520.6L767.7 520.6L767.7 548.1L769.2 548.1L769.2 563.3L770 563.3L770 536L770.4 536L770.4 488.5L771.2 488.5L771.2 508.2L772.2 508.2L772.2 525L773 525L773 512.3L774.9 512.3L774.9 501.9L775.7 501.9L775.7 519.2L776.7 519.2L776.7 541.9L777.5 541.9L777.5 514.8L779 514.8L779 492.1L779.8 492.1L779.8 525.2L780.8 525.2L780.8 541L781.6 541L781.6 504.6L782.9 504.6L782.9 460L783.7 460L783.7 477.7L785.2 477.7L785.2 510.8L786 510.8L786 498.7L788.2 498.7L788.2 485.8L789 485.8L789 504.4L789.1 504.4L789.1 540.2L789.9 540.2L789.9 503.5L790.5 503.5L790.5 475.2L791.3 475.2L791.3 508L793 508L793 530.4L793.8 530.4L793.8 516.9L795.4 516.9L795.4 487.6L796.2 487.6L796.2 479.7L798 479.7L798 475.2L798.8 475.2L798.8 512L799.5 512L799.5 539.3L800.3 539.3L800.3 510.3L801.2 510.3L801.2 478.7L802 478.7L802 499.7L804.3 499.7L804.3 548.2L805.1 548.2L805.1 521.4L806 521.4L806 476L806.8 476L806.8 512.1L807.8 512.1L807.8 550.8L808.6 550.8L808.6 526.9L809.6 526.9L809.6 512.6L810.4 512.6L810.4 497.2L812.3 497.2L812.3 464.5L813.1 464.5L813.1 506.7L814.9 506.7L814.9 537.5L815.7 537.5L815.7 518.1L816.7 518.1L816.7 474.3L817.5 474.3L817.5 502.1L818.5 502.1L818.5 528.6L819.3 528.6L819.3 521.2L820.3 521.2L820.3 510.8L821.1 510.8L821.1 522.8L822.1 522.8L822.1 530.4L822.9 530.4L822.9 518.8L825.6 518.8L825.6 498.3L826.4 498.3L826.4 512L827.9 512L827.9 519.7L828.7 519.7L828.7 501.4L830.1 501.4L830.1 489.4L830.9 489.4L830.9 520.1L831.3 520.1L831.3 533.9L832.1 533.9L832.1 503L834 503L834 474.3L834.8 474.3L834.8 485L835.8 485L835.8 501.9L836.6 501.9L836.6 497.6L838.1 497.6L838.1 494.7L838.9 494.7L838.9 505.3L839.9 505.3L839.9 515.2L840.7 515.2L840.7 506.2L842.2 506.2L842.2 485.8L843 485.8L843 505.4L843.4 505.4L843.4 538.4L844.2 538.4L844.2 522.5L846.5 522.5L846.5 498.3L847.3 498.3L847.3 510.6L847.9 510.6L847.9 519.7L848.7 519.7L848.7 530.2L850 530.2L850 535.7L850.8 535.7L850.8 511.5L851.5 511.5L851.5 469.8L852.3 469.8L852.3 498.9L853.6 498.9L853.6 530.4L854.4 530.4L854.4 499.9L856.4 499.9L856.4 475.2L857.2 475.2L857.2 518.2L857.7 518.2L857.7 542.8L858.5 542.8L858.5 500L860.7 500L860.7 476.9L861.5 476.9L861.5 494.7L863 494.7L863 513.4L863.8 513.4L863.8 499.3L865.7 499.3L865.7 475.2L866.5 475.2L866.5 492L867.1 492L867.1 519.7L867.9 519.7L867.9 500.4L869.3 500.4L869.3 484.9L870.1 484.9L870.1 499.7L871 499.7L871 514.3L871.8 514.3L871.8 502.5L873.7 502.5L873.7 477.8L874.5 477.8L874.5 516L875.5 516L875.5 533.9L876.3 533.9L876.3 493.2L877.3 493.2L877.3 461.8L878.1 461.8L878.1 485.2L879.1 485.2L879.1 499.2L879.9 499.2L879.9 511.6L880.8 511.6L880.8 526.8L881.6 526.8L881.6 504.9L883.1 504.9L883.1 482.3L883.9 482.3L883.9 507.3L884.9 507.3L884.9 539.3L885.7 539.3L885.7 516.1L887.1 516.1L887.1 477.8L887.9 477.8L887.9 503.4L888.5 503.4L888.5 516.1L889.3 516.1L889.3 507.5L890.6 507.5L890.6 502.8L891.4 502.8L891.4 516.8L893.3 516.8L893.3 529.5L894.1 529.5L894.1 511.6L895.6 511.6L895.6 488.5L896.4 488.5L896.4 503L897.2 503L897.2 523.2L898 523.2L898 511.6L898.6 511.6L898.6 490.3L899.4 490.3L899.4 512L901 512L901 527.7L901.8 527.7L901.8 507.3L903.6 507.3L903.6 463.6L904.4 463.6L904.4 490.6L906.7 490.6L906.7 513.4L907.5 513.4L907.5 491L909.9 491L909.9 476L910.7 476L910.7 497.3L911.1 497.3L911.1 546.4L911.9 546.4L911.9 504.3L912.5 504.3L912.5 469.8L913.3 469.8L913.3 494.9L915.2 494.9L915.2 515.2L916 515.2L916 506L917.3 506L917.3 487.6L918.1 487.6L918.1 519.1L920 519.1L920 541L920.8 541L920.8 520.5L921.8 520.5L921.8 487.6L922.6 487.6L922.6 505.5L923.6 505.5L923.6 525L924.4 525L924.4 508L926.6 508L926.6 483.2L927.4 483.2L927.4 500.3L928 500.3L928 533L928.8 533L928.8 489.8L929.8 489.8L929.8 462.7L930.6 462.7L930.6 490.1L931.6 490.1L931.6 510.8L932.4 510.8L932.4 495.4L935.5 495.4L935.5 485.8L936.3 485.8L936.3 510.6L938.2 510.6L938.2 537.5L939 537.5L939 515.9L940.1 515.9L940.1 484.9L940.9 484.9L940.9 506.5L941.9 506.5L941.9 522.3L942.7 522.3L942.7 501.8L944.6 501.8L944.6 476L945.4 476L945.4 500.6L946.7 500.6L946.7 518.8L947.5 518.8L947.5 531.4L947.3 531.4L947.3 554.4L948.1 554.4L948.1 527.8L949 527.8L949 493.9L949.8 493.9L949.8 522.2L951.2 522.2L951.2 538.4L952 538.4L952 529L952.6 529L952.6 515.2L953.4 515.2L953.4 526.4L954.7 526.4L954.7 544.6L955.5 544.6L955.5 521.5L957.4 521.5L957.4 493.9L958.2 493.9L958.2 511.4L958.8 511.4L958.8 532.1L959.6 532.1L959.6 520.9L962.8 520.9L962.8 500.1L963.6 500.1L963.6 519.5L964.5 519.5L964.5 540.2L965.3 540.2L965.3 515.5L966.3 515.5L966.3 478.7L967.1 478.7L967.1 507.2L968.6 507.2L968.6 519.7L969.4 519.7L969.4 529L972.6 529L972.6 539.3L973.4 539.3L973.4 508.4L974 508.4L974 462.7L974.8 462.7L974.8 483.8L976.5 483.8L976.5 528.6L977.3 528.6L977.3 497.5L979.3 497.5L979.3 478.7L980.1 478.7L980.1 511.1L981.5 511.1L981.5 546.4L982.3 546.4L982.3 519.4L983.6 519.4L983.6 477.8L984.4 477.8L984.4 495.3L985.9 495.3L985.9 522.3L986.7 522.3L986.7 512.4L987.2 512.4L987.2 505.4L988 505.4L988 483.9L989.5 483.9L989.5 464.5L990.3 464.5L990.3 498.9L991.3 498.9L991.3 537.5L992.1 537.5L992.1 522.2L993.6 522.2L993.6 493.9L994.4 493.9L994.4 509.2L996.1 509.2L996.1 539.3L996.9 539.3L996.9 511.8L998.4 511.8L998.4 477.8L999.2 477.8L999.2 476L1001.4 476L1001.4 472.5L1002.2 472.5L1002.2 491.4L1003.7 491.4L1003.7 534.8L1004.5 534.8L1004.5 494.7L1005.5 494.7L1005.5 469.8L1006.3 469.8L1006.3 469.8" fill="none" stroke="#0072bd" stroke-width="1.8" stroke-linejoin="miter"/>
<path clip-path="url(#c2)" d="M487 372.3L487 372.3L487 389.3L489.2 389.3L489.2 373.5L491.8 373.5L491.8 389.7L494.3 389.7L494.3 376.4L496.9 376.4L496.9 384.7L499.5 384.7L499.5 381L502 381L502 386L504.6 386L504.6 387.9L507.1 387.9L507.1 379.9L509.7 379.9L509.7 376.6L512.3 376.6L512.3 375.2L514.8 375.2L514.8 374.2L517.4 374.2L517.4 389.9L519.9 389.9L519.9 373.5L522.5 373.5L522.5 389.7L525.1 389.7L525.1 379.5L527.6 379.5L527.6 386.4L530.2 386.4L530.2 384.3L532.8 384.3L532.8 378.2L535.3 378.2L535.3 383L537.9 383L537.9 381.6L540.4 381.6L540.4 379.9L543 379.9L543 374.6L545.6 374.6L545.6 370.9L548.1 370.9L548.1 391.7L550.7 391.7L550.7 376.3L553.2 376.3L553.2 383.4L555.8 383.4L555.8 388.2L558.4 388.2L558.4 389.4L560.9 389.4L560.9 387.9L563.5 387.9L563.5 390.1L566.1 390.1L566.1 383.6L568.6 383.6L568.6 374.7L571.2 374.7L571.2 390.4L573.7 390.4L573.7 371.1L576.3 371.1L576.3 377.6L578.9 377.6L578.9 373.6L581.4 373.6L581.4 391.1L584 391.1L584 378.8L586.5 378.8L586.5 388.3L589.1 388.3L589.1 372L591.7 372L591.7 389.2L594.2 389.2L594.2 384.7L596.8 384.7L596.8 384.2L599.4 384.2L599.4 382.3L601.9 382.3L601.9 374.6L604.5 374.6L604.5 370.8L607 370.8L607 389.4L609.6 389.4L609.6 371.7L612.2 371.7L612.2 377.7L614.7 377.7L614.7 379.8L617.3 379.8L617.3 373.2L619.8 373.2L619.8 371.6L622.4 371.6L622.4 377.7L625 377.7L625 370.7L627.5 370.7L627.5 385.1L630.1 385.1L630.1 387.9L632.7 387.9L632.7 379.2L635.2 379.2L635.2 371.2L637.8 371.2L637.8 379.5L640.3 379.5L640.3 375.4L642.9 375.4L642.9 371.6L645.5 371.6L645.5 377.1L648 377.1L648 386.2L650.6 386.2L650.6 389.9L653.1 389.9L653.1 376.9L655.7 376.9L655.7 373.3L658.3 373.3L658.3 383.5L660.8 383.5L660.8 376.9L663.4 376.9L663.4 387.8L666 387.8L666 372.4L668.5 372.4L668.5 386.8L671.1 386.8L671.1 379.7L673.6 379.7L673.6 386.9L676.2 386.9L676.2 391.2L678.8 391.2L678.8 379.5L681.3 379.5L681.3 376.4L683.9 376.4L683.9 375L686.4 375L686.4 389.9L689 389.9L689 388.3L691.6 388.3L691.6 389.5L694.1 389.5L694.1 375.2L696.7 375.2L696.7 377.1L699.3 377.1L699.3 372.5L701.8 372.5L701.8 371L704.4 371L704.4 390.8L706.9 390.8L706.9 378.5L709.5 378.5L709.5 389.2L712.1 389.2L712.1 384.9L714.6 384.9L714.6 381.8L717.2 381.8L717.2 381.8L719.7 381.8L719.7 372.2L722.3 372.2L722.3 386.3L724.9 386.3L724.9 386.5L727.4 386.5L727.4 378.6L730 378.6L730 378.6L732.6 378.6L732.6 388.4L735.1 388.4L735.1 375.1L737.7 375.1L737.7 379.1L740.2 379.1L740.2 391.4L742.8 391.4L742.8 375.3L745.4 375.3L745.4 381.1L747.9 381.1L747.9 378L750.5 378L750.5 385.1L753 385.1L753 375.8L755.6 375.8L755.6 371.9L758.2 371.9L758.2 371.8L760.7 371.8L760.7 387.3L763.3 387.3L763.3 381.2L765.9 381.2L765.9 375L768.4 375L768.4 374.5L771 374.5L771 377.9L773.5 377.9L773.5 376.3L776.1 376.3L776.1 385.6L778.7 385.6L778.7 381.4L781.2 381.4L781.2 382.9L783.8 382.9L783.8 383L786.3 383L786.3 390.9L788.9 390.9L788.9 378.7L791.5 378.7L791.5 378.6L794 378.6L794 385.1L796.6 385.1L796.6 372.5L799.1 372.5L799.1 383.7L801.7 383.7L801.7 387.4L804.3 387.4L804.3 374.6L806.8 374.6L806.8 371.6L809.4 371.6L809.4 381.3L812 381.3L812 383.2L814.5 383.2L814.5 376.5L817.1 376.5L817.1 378.1L819.6 378.1L819.6 370.7L822.2 370.7L822.2 390.5L824.8 390.5L824.8 382.4L827.3 382.4L827.3 385.6L829.9 385.6L829.9 384.5L832.4 384.5L832.4 381.3L835 381.3L835 389.3L837.6 389.3L837.6 386.9L840.1 386.9L840.1 387.7L842.7 387.7L842.7 378.5L845.3 378.5L845.3 374.1L847.8 374.1L847.8 386L850.4 386L850.4 383.5L852.9 383.5L852.9 384.9L855.5 384.9L855.5 390.7L858.1 390.7L858.1 378.9L860.6 378.9L860.6 385.7L863.2 385.7L863.2 373.1L865.7 373.1L865.7 371.8L868.3 371.8L868.3 386.3L870.9 386.3L870.9 391.6L873.4 391.6L873.4 379.2L876 379.2L876 381.4L878.6 381.4L878.6 387.3L881.1 387.3L881.1 373.7L883.7 373.7L883.7 373.8L886.2 373.8L886.2 382L888.8 382L888.8 387.8L891.4 387.8L891.4 374.5L893.9 374.5L893.9 376.2L896.5 376.2L896.5 392L899 392L899 373.4L901.6 373.4L901.6 370.7L904.2 370.7L904.2 372.2L906.7 372.2L906.7 391.3L909.3 391.3L909.3 390.5L911.9 390.5L911.9 386.3L914.4 386.3L914.4 384.4L917 384.4L917 370.8L919.5 370.8L919.5 377.2L922.1 377.2L922.1 381.9L924.7 381.9L924.7 384.3L927.2 384.3L927.2 380.8L929.8 380.8L929.8 388.2L932.3 388.2L932.3 381.4L934.9 381.4L934.9 384.4L937.5 384.4L937.5 380L940 380L940 377.2L942.6 377.2L942.6 372.9L945.2 372.9L945.2 389.3L947.7 389.3L947.7 385.7L950.3 385.7L950.3 371.9L952.8 371.9L952.8 380.7L955.4 380.7L955.4 373.2L958 373.2L958 373.8L960.5 373.8L960.5 385.8L963.1 385.8L963.1 384.6L965.6 384.6L965.6 381.3L968.2 381.3L968.2 376.6L970.8 376.6L970.8 374.1L973.3 374.1L973.3 372L975.9 372L975.9 377.7L978.5 377.7L978.5 386.2L981 386.2L981 374.9L983.6 374.9L983.6 379.5L986.1 379.5L986.1 388.3L988.7 388.3L988.7 388.8L991.3 388.8L991.3 388.8L993.8 388.8L993.8 380.6L996.4 380.6L996.4 383.1L998.9 383.1L998.9 380.7L1001.5 380.7L1001.5 380.8L1004.1 380.8L1004.1 370.7L1006.6 370.7L1006.6 379.8L1006.8 379.8L1006.8 379.8L1006.8 406.3L1006.8 406.3L1006.6 406.3L1006.6 403.5L1004.1 403.5L1004.1 398L1001.5 398L1001.5 397.6L998.9 397.6L998.9 394.8L996.4 394.8L996.4 397.5L993.8 397.5L993.8 401.5L991.3 401.5L991.3 412.6L988.7 412.6L988.7 404.5L986.1 404.5L986.1 408.9L983.6 408.9L983.6 396.6L981 396.6L981 403.7L978.5 403.7L978.5 416.7L975.9 416.7L975.9 394.4L973.3 394.4L973.3 403.4L970.8 403.4L970.8 400.4L968.2 400.4L968.2 395.8L965.6 395.8L965.6 399.1L963.1 399.1L963.1 406.1L960.5 406.1L960.5 416L958 416L958 411L955.4 411L955.4 409.7L952.8 409.7L952.8 414.2L950.3 414.2L950.3 407.8L947.7 407.8L947.7 413.1L945.2 413.1L945.2 412.4L942.6 412.4L942.6 398.8L940 398.8L940 408.8L937.5 408.8L937.5 398.3L934.9 398.3L934.9 403.7L932.3 403.7L932.3 407.4L929.8 407.4L929.8 413.5L927.2 413.5L927.2 416.3L924.7 416.3L924.7 411.9L922.1 411.9L922.1 411.1L919.5 411.1L919.5 413.3L917 413.3L917 395.3L914.4 395.3L914.4 394.5L911.9 394.5L911.9 414.5L909.3 414.5L909.3 405.7L906.7 405.7L906.7 394.7L904.2 394.7L904.2 412L901.6 412L901.6 404.9L899 404.9L899 398L896.5 398L896.5 395.3L893.9 395.3L893.9 408.3L891.4 408.3L891.4 402.2L888.8 402.2L888.8 399.6L886.2 399.6L886.2 397.9L883.7 397.9L883.7 405.7L881.1 405.7L881.1 413.8L878.6 413.8L878.6 401.9L876 401.9L876 414L873.4 414L873.4 395.3L870.9 395.3L870.9 415.5L868.3 415.5L868.3 399.2L865.7 399.2L865.7 401.3L863.2 401.3L863.2 412L860.6 412L860.6 403L858.1 403L858.1 402.8L855.5 402.8L855.5 411.2L852.9 411.2L852.9 396.4L850.4 396.4L850.4 395.2L847.8 395.2L847.8 396.3L845.3 396.3L845.3 405.9L842.7 405.9L842.7 416.5L840.1 416.5L840.1 402.5L837.6 402.5L837.6 413.8L835 413.8L835 399.9L832.4 399.9L832.4 396.5L829.9 396.5L829.9 400.3L827.3 400.3L827.3 414.8L824.8 414.8L824.8 394.9L822.2 394.9L822.2 399.9L819.6 399.9L819.6 398.3L817.1 398.3L817.1 410.1L814.5 410.1L814.5 394.6L812 394.6L812 410.2L809.4 410.2L809.4 396.8L806.8 396.8L806.8 412L804.3 412L804.3 394.7L801.7 394.7L801.7 400.8L799.1 400.8L799.1 412.6L796.6 412.6L796.6 406.9L794 406.9L794 412.4L791.5 412.4L791.5 394.7L788.9 394.7L788.9 395L786.3 395L786.3 414.6L783.8 414.6L783.8 407.5L781.2 407.5L781.2 402.9L778.7 402.9L778.7 402.7L776.1 402.7L776.1 410.9L773.5 410.9L773.5 403.5L771 403.5L771 413.6L768.4 413.6L768.4 394.8L765.9 394.8L765.9 404.2L763.3 404.2L763.3 402.4L760.7 402.4L760.7 396.5L758.2 396.5L758.2 395.3L755.6 395.3L755.6 408.7L753 408.7L753 412.6L750.5 412.6L750.5 407.5L747.9 407.5L747.9 407.1L745.4 407.1L745.4 397.4L742.8 397.4L742.8 414.5L740.2 414.5L740.2 401.7L737.7 401.7L737.7 410.3L735.1 410.3L735.1 397.2L732.6 397.2L732.6 399.9L730 399.9L730 399.9L727.4 399.9L727.4 400.6L724.9 400.6L724.9 408.3L722.3 408.3L722.3 407.6L719.7 407.6L719.7 395.7L717.2 395.7L717.2 416.4L714.6 416.4L714.6 406.1L712.1 406.1L712.1 412L709.5 412L709.5 398.2L706.9 398.2L706.9 411.9L704.4 411.9L704.4 395.1L701.8 395.1L701.8 412.1L699.3 412.1L699.3 396.5L696.7 396.5L696.7 410.4L694.1 410.4L694.1 396.6L691.6 396.6L691.6 397.9L689 397.9L689 405.5L686.4 405.5L686.4 406.1L683.9 406.1L683.9 407.4L681.3 407.4L681.3 404.6L678.8 404.6L678.8 416L676.2 416L676.2 395.4L673.6 395.4L673.6 408.4L671.1 408.4L671.1 405.2L668.5 405.2L668.5 395.4L666 395.4L666 416L663.4 416L663.4 401.7L660.8 401.7L660.8 410.7L658.3 410.7L658.3 399.4L655.7 399.4L655.7 401.3L653.1 401.3L653.1 410L650.6 410L650.6 407.5L648 407.5L648 399.8L645.5 399.8L645.5 399.4L642.9 399.4L642.9 408.8L640.3 408.8L640.3 399.5L637.8 399.5L637.8 413.1L635.2 413.1L635.2 408L632.7 408L632.7 397.3L630.1 397.3L630.1 408.3L627.5 408.3L627.5 404.1L625 404.1L625 410.6L622.4 410.6L622.4 415.5L619.8 415.5L619.8 415.6L617.3 415.6L617.3 415.6L614.7 415.6L614.7 404.5L612.2 404.5L612.2 403L609.6 403L609.6 399.1L607 399.1L607 409.8L604.5 409.8L604.5 416.8L601.9 416.8L601.9 399.1L599.4 399.1L599.4 410.8L596.8 410.8L596.8 411.8L594.2 411.8L594.2 405.2L591.7 405.2L591.7 398.7L589.1 398.7L589.1 411.1L586.5 411.1L586.5 405.6L584 405.6L584 405.8L581.4 405.8L581.4 412.2L578.9 412.2L578.9 396.9L576.3 396.9L576.3 409.1L573.7 409.1L573.7 414.8L571.2 414.8L571.2 405.4L568.6 405.4L568.6 406.8L566.1 406.8L566.1 405.3L563.5 405.3L563.5 412.3L560.9 412.3L560.9 404.5L558.4 404.5L558.4 398.6L555.8 398.6L555.8 405L553.2 405L553.2 398.4L550.7 398.4L550.7 399.2L548.1 399.2L548.1 413.5L545.6 413.5L545.6 397.2L543 397.2L543 415.1L540.4 415.1L540.4 401.6L537.9 401.6L537.9 409.9L535.3 409.9L535.3 408.9L532.8 408.9L532.8 409.3L530.2 409.3L530.2 404.2L527.6 404.2L527.6 410.3L525.1 410.3L525.1 398.4L522.5 398.4L522.5 408.2L519.9 408.2L519.9 414.2L517.4 414.2L517.4 408L514.8 408L514.8 406.3L512.3 406.3L512.3 414.3L509.7 414.3L509.7 406.8L507.1 406.8L507.1 403.8L504.6 403.8L504.6 394.1L502 394.1L502 409.1L499.5 409.1L499.5 397.5L496.9 397.5L496.9 402.6L494.3 402.6L494.3 403.1L491.8 403.1L491.8 396.4L489.2 396.4L489.2 416.1L487 416.1L487 413.8L487 413.8Z" fill="#0072bd"/>
<path clip-path="url(#c2)" d="M488.9 345.6V394M487.7 394V424.1M494 354.5V394M492.8 394V435.7M499.2 349.6V394M498 394V431.7M504.3 361.7V394M503.1 394V448M509.4 342.1V394M508.2 394V421.8M514.5 358.6V394M513.3 394V438.6M519.6 348.1V394M518.4 394V428.5M524.8 365.4V394M523.6 394V445.1M529.9 346.3V394M528.7 394V424.7M535 355.2V394M533.8 394V438.2M540.1 353.2V394M538.9 394V431.3M545.3 362.7V394M544.1 394V444.1M550.4 344.5V394M549.2 394V421.9M555.5 358.7V394M554.3 394V441M560.6 348.3V394M559.4 394V428.6M565.8 366V394M564.6 394V446.2M570.9 345.1V394M569.7 394V425.9M576 351.1V394M574.8 394V437.4M581.1 351.1V394M579.9 394V429.7M586.2 363.4V394M585 394V444.3M591.4 341.1V394M590.2 394V420.7M596.5 359.1V394M595.3 394V439.5M601.6 351.6V394M600.4 394V430.1M606.7 365V394M605.5 394V447M611.9 344.7V394M610.7 394V423.6M617 356V394M615.8 394V436.8M622.1 352.1V394M620.9 394V430.9M627.2 363.3V394M626 394V439.7M632.4 342.8V394M631.2 394V423M637.5 356.7V394M636.3 394V439.6M642.6 348.2V394M641.4 394V430.1M647.7 361.8V394M646.5 394V444.1M652.8 346V394M651.6 394V426.6M658 352.1V394M656.8 394V435.3M663.1 352.9V394M661.9 394V431.2M668.2 365.2V394M667 394V441.6M673.3 342.3V394M672.1 394V420.8M678.5 361V394M677.3 394V439.5M683.6 349.1V394M682.4 394V426.6M688.7 367.1V394M687.5 394V446.5M693.8 346V394M692.6 394V426.6M699 355.6V394M697.8 394V435.1M704.1 351.3V394M702.9 394V430.9M709.2 364.9V394M708 394V441.2M714.3 340.9V394M713.1 394V421.8M719.4 359.4V394M718.2 394V440.4M724.6 347.8V394M723.4 394V426.6M729.7 364.7V394M728.5 394V447.1M734.8 346.1V394M733.6 394V425.2M739.9 354.7V394M738.7 394V436.4M745.1 352.1V394M743.9 394V433.2M750.2 361.8V394M749 394V443.5M755.3 341.6V394M754.1 394V423M760.4 359.4V394M759.2 394V443.2M765.5 351.7V394M764.3 394V431.2M770.7 361.8V394M769.5 394V444.9M775.8 344.1V394M774.6 394V425.7M780.9 351.9V394M779.7 394V437.7M786 354V394M784.8 394V430.2M791.2 361.6V394M790 394V442.1M796.3 341.8V394M795.1 394V423.2M801.4 362V394M800.2 394V439.3M806.5 350.7V394M805.3 394V429.3M811.7 367.2V394M810.5 394V446.5M816.8 346.9V394M815.6 394V423.4M821.9 354.9V394M820.7 394V434.8M827 354.6V394M825.8 394V433M832.1 362.5V394M830.9 394V442.6M837.3 342.5V394M836.1 394V421.3M842.4 357.7V394M841.2 394V440.2M847.5 353.1V394M846.3 394V428.7M852.6 363.9V394M851.4 394V443.7M857.8 343.1V394M856.6 394V425.7M862.9 356.3V394M861.7 394V436M868 352.9V394M866.8 394V432.2M873.1 363.2V394M871.9 394V441.1M878.3 341.1V394M877.1 394V422.4M883.4 357.9V394M882.2 394V438.9M888.5 348.4V394M887.3 394V428.6M893.6 366V394M892.4 394V444.8M898.7 344.8V394M897.5 394V426.1M903.9 356V394M902.7 394V438.4M909 349.5V394M907.8 394V433.3M914.1 362.3V394M912.9 394V443.5M919.2 343V394M918 394V423.8M924.4 360.5V394M923.2 394V439.8M929.5 351.9V394M928.3 394V428.6M934.6 364.5V394M933.4 394V446.6M939.7 344.2V394M938.5 394V428M944.9 356.6V394M943.7 394V439.1M950 352.4V394M948.8 394V431.5M955.1 363.2V394M953.9 394V444.3M960.2 340.9V394M959 394V422.8M965.3 359V394M964.1 394V441.8M970.5 348.7V394M969.3 394V430.5M975.6 363.8V394M974.4 394V444M980.7 344V394M979.5 394V423.2M985.8 355.3V394M984.6 394V437.4M991 352.7V394M989.8 394V433M996.1 365.3V394M994.9 394V443.7M1001.2 342V394M1000 394V421.9M1006.3 356.8V394M1005.1 394V440.6" fill="none" stroke="#0072bd" stroke-width="2.6"/>
</svg>
<div class="ax" style="right:606px;top:122.3px;text-align:right">80</div>
<div class="ax" style="right:606px;top:144.4px;text-align:right">60</div>
<div class="ax" style="right:606px;top:166.5px;text-align:right">40</div>
<div class="ax" style="right:606px;top:188.6px;text-align:right">20</div>
<div class="axl" style="right:619.2px;top:152px">ThrottlePosition</div>
<div class="ax" style="right:606px;top:242.8px;text-align:right">80</div>
<div class="ax" style="right:606px;top:268.7px;text-align:right">60</div>
<div class="ax" style="right:606px;top:294.6px;text-align:right">40</div>
<div class="axl" style="right:619.2px;top:269px">WastegateValve</div>
<div class="ax" style="right:606px;top:361.6px;text-align:right">3500</div>
<div class="ax" style="right:606px;top:388.1px;text-align:right">3000</div>
<div class="ax" style="right:606px;top:414.6px;text-align:right">2500</div>
<div class="axl" style="right:631px;top:387px">EngineSpeed</div>
<div class="ax" style="right:606px;top:463.1px;text-align:right">60</div>
<div class="ax" style="right:606px;top:487.9px;text-align:right">40</div>
<div class="ax" style="right:606px;top:512.6px;text-align:right">20</div>
<div class="ax" style="right:606px;top:537.4px;text-align:right">0</div>
<div class="axl" style="right:619px;top:504px">SparkTiming</div>
<div class="ax" style="left:511.1px;width:40px;top:566px;text-align:center">0.2</div>
<div class="ax" style="left:555.1px;width:40px;top:566px;text-align:center">0.4</div>
<div class="ax" style="left:599.2px;width:40px;top:566px;text-align:center">0.6</div>
<div class="ax" style="left:643.2px;width:40px;top:566px;text-align:center">0.8</div>
<div class="ax" style="left:687.3px;width:40px;top:566px;text-align:center">1</div>
<div class="ax" style="left:731.4px;width:40px;top:566px;text-align:center">1.2</div>
<div class="ax" style="left:775.4px;width:40px;top:566px;text-align:center">1.4</div>
<div class="ax" style="left:819.5px;width:40px;top:566px;text-align:center">1.6</div>
<div class="ax" style="left:863.5px;width:40px;top:566px;text-align:center">1.8</div>
<div class="ax" style="left:907.6px;width:40px;top:566px;text-align:center">2</div>
<div class="ax" style="left:951.7px;width:40px;top:566px;text-align:center">2.2</div>
<div class="axl" style="left:697px;width:100px;top:577px;text-align:center">Time Step</div>
<div class="ax" style="left:983px;top:579px;font-size:11px">&#215;10<span style="font-size:9px;position:relative;top:-4.5px">4</span></div>
</body></html>
